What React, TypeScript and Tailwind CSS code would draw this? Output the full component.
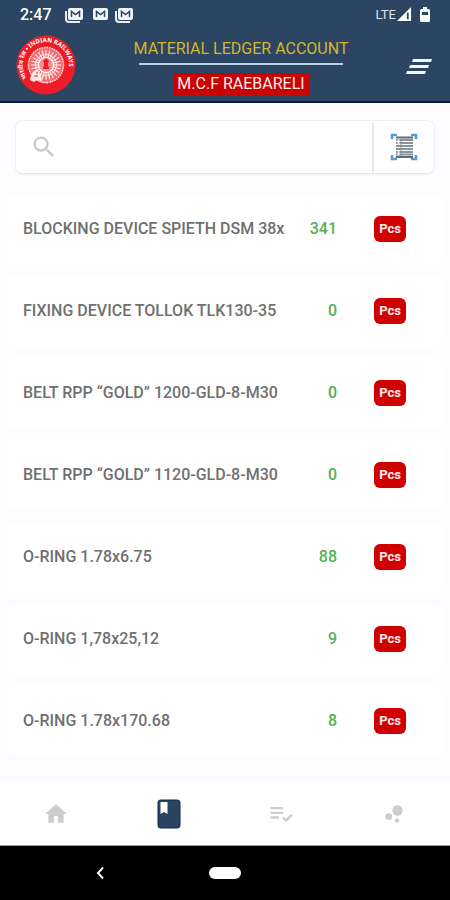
import { MdBubbleChart, MdHome, MdPlaylistAddCheck, MdSearch } from "react-icons/md";

const items = [
  { id: 1, name: "BLOCKING DEVICE SPIETH DSM 38x", stock: 341 },
  { id: 2, name: "FIXING DEVICE TOLLOK TLK130-35", stock: 0 },
  { id: 3, name: "BELT RPP “GOLD” 1200-GLD-8-M30", stock: 0 },
  { id: 4, name: "BELT RPP “GOLD” 1120-GLD-8-M30", stock: 0 },
  { id: 5, name: "O-RING 1.78x6.75", stock: 88 },
  { id: 6, name: "O-RING 1,78x25,12", stock: 9 },
  { id: 7, name: "O-RING 1.78x170.68", stock: 8 },
];

const spokes = Array.from({ length: 24 }, (_, i) => i * 15);

function MailIcon({ stacked = false }: { stacked?: boolean }) {
  return (
    <svg width="20" height="16" viewBox="0 0 20 16" fill="none">
      {stacked && <path d="M2 4v8a3 3 0 0 0 3 3h11" stroke="#e8eef5" strokeWidth="2" />}
      <rect x="4" y="1" width="15" height="12" rx="2" fill="#f1f5f9" />
      <path d="M7.500 10V4.500l4 3 4-3V10" stroke="#2b4562" strokeWidth="1.500" />
    </svg>
  );
}

function StatusBar() {
  return (
    <div className="flex h-7 items-center justify-between pl-5 pr-5 pt-px text-white">
      <div className="flex items-center gap-2">
        <span className="text-base font-medium">2:47</span>
        <div className="flex items-center gap-[5px] pl-1">
          <MailIcon stacked />
          <MailIcon />
          <MailIcon stacked />
        </div>
      </div>
      <div className="flex items-center">
        <span className="text-[13px] text-[#dbe3ec]">LTE</span>
        <svg width="15" height="15" viewBox="0 0 16 16" className="ml-px">
          <path d="M0 15 15 0v15Z" fill="#fff" />
          <path d="M11.500 6v7" stroke="#2b4562" strokeWidth="2" />
        </svg>
        <svg width="10" height="16" viewBox="0 0 10 16" className="ml-2">
          <path d="M3 0h4v2h1.500Q10 2 10 3.500v10Q10 15 8.500 15h-7Q0 15 0 13.500v-10Q0 2 1.500 2H3Z" fill="#fff" />
          <path d="M2 5h6v3H2Z" fill="#2b4562" />
        </svg>
      </div>
    </div>
  );
}

function RailwayLogo() {
  return (
    <svg width="60" height="60" viewBox="0 0 60 60" className="shrink-0" role="img" aria-label="Indian Railways">
      <defs>
        <path id="logo-ring" d="M11 43A23 23 0 1 1 46 46.500" />
      </defs>
      <circle cx="30" cy="30" r="29.500" fill="#ec1c28" />
      <circle cx="30" cy="30" r="18" fill="#f36b71" />
      <circle cx="30" cy="30" r="17.500" fill="none" stroke="#ffd6d6" strokeWidth="1.500" strokeDasharray="1.500 1" />
      {spokes.map((angle) => (
        <path key={angle} d="M30 15v8" stroke="#ffe8e8" strokeWidth="1.200" transform={`rotate(${angle} 30 30)`} />
      ))}
      <circle cx="30" cy="30" r="10.500" fill="none" stroke="#ffe8e8" strokeWidth="1" />
      <circle cx="30" cy="30" r="7.500" fill="#f58e92" stroke="#fff" strokeWidth="1.200" />
      <path d="M27 34h6v-2l-1-1v-3l1-2-3-3-3 3 1 2v3l-1 1Z" fill="#ec1c28" />
      <path d="M14 45c1-6 3-10 8-10l3 5 1 6-5-1-3 2Z" fill="#ffe9e9" />
      <path d="M18 41h4M21 37v2" stroke="#ec1c28" strokeWidth="1" />
      <path d="M26 47q5 2 10-1" stroke="#ffc4c4" strokeWidth="1.500" strokeDasharray="2 2" fill="none" />
      <text fill="#fff" fontSize="6" fontWeight="700" className="font-['Noto_Sans',sans-serif]">
        <textPath href="#logo-ring">भारतीय रेल • INDIAN RAILWAYS</textPath>
      </text>
    </svg>
  );
}

function Header() {
  return (
    <header className="border-b-2 border-[#071747] bg-[#2b4562]">
      <StatusBar />
      <div className="flex h-[73px] items-center justify-between px-4">
        <RailwayLogo />
        <div className="flex flex-col items-center pt-1">
          <h1 className="text-base leading-5 text-[#d5b62d]">MATERIAL LEDGER ACCOUNT</h1>
          <div className="mt-1 h-[2px] w-[204px] bg-[#b9d0e4]" />
          <p className="mt-2 bg-[#cb0000] px-1 text-base leading-[22px] text-[#f6eeee]">M.C.F RAEBARELI</p>
        </div>
        <button type="button" aria-label="Menu" className="cursor-pointer pt-1">
          <svg width="28" height="16" viewBox="0 0 28 16" fill="#f3f6fa">
            <path d="M7 0h19l-1 3H6ZM4 6h19l-1 3H3ZM1 12h19l-1 3H0Z" />
          </svg>
        </button>
      </div>
    </header>
  );
}

function ScanIcon() {
  return (
    <svg width="28" height="28" viewBox="0 0 28 28" fill="none">
      <path d="M2 6V2h5M21 2h5v4M26 22v4h-5M7 26H2v-4" stroke="#4a9fd6" strokeWidth="2.500" />
      <path d="M6 4.500h17M6 24h17" stroke="#5f6b73" strokeWidth="2" />
      <path d="M6 7h17M6 10h17M6 13h17M6 16h17M6 19h17M6 21.500h17" stroke="#87939a" strokeWidth="1.800" />
      <path d="M8.500 6v6M8.500 18v4" stroke="#eef2f4" strokeWidth="1.800" />
      <path d="M11 6v17" stroke="#87939a" strokeWidth="1" />
    </svg>
  );
}

function SearchBar() {
  return (
    <div className="mx-[15px] mt-[17px] flex h-[54px] items-center rounded-lg border border-[#f1eff2] border-b-[#e6e4e7] bg-white shadow-xs">
      <label htmlFor="search" className="pl-[14px] text-[#cacaca]">
        <MdSearch size={28} />
      </label>
      <input id="search" type="search" aria-label="Search items" className="h-full min-w-0 flex-1 px-2 text-base outline-none" />
      <button type="button" aria-label="Scan barcode" className="flex h-[49px] w-[62px] cursor-pointer items-center justify-center border-l-2 border-[#e9e8ea]">
        <ScanIcon />
      </button>
    </div>
  );
}

function NavBar() {
  return (
    <nav className="grid h-[64px] grid-cols-4 items-center border-b border-[#9a9a9a] bg-white text-[#cdcdcd]">
      <a href="#home" aria-label="Home" className="flex justify-center">
        <MdHome size={26} />
      </a>
      <a href="#ledger" aria-label="Ledger" className="flex justify-center">
        <svg width="24" height="30" viewBox="0 0 24 30">
          <rect x="1" y="1" width="22" height="28" rx="2.500" fill="#284460" stroke="#10284a" />
          <path d="M3.500 3h7v12L7 13l-3.500 2Z" fill="#fff" />
        </svg>
      </a>
      <a href="#checklist" aria-label="Checklist" className="flex justify-center">
        <MdPlaylistAddCheck size={28} />
      </a>
      <a href="#reports" aria-label="Reports" className="flex justify-center">
        <MdBubbleChart size={26} />
      </a>
    </nav>
  );
}

function SystemBar() {
  return (
    <div className="grid h-[54px] grid-cols-[1fr_32px_1fr] items-center bg-black">
      <button type="button" aria-label="Back" className="ml-[94px] w-3 cursor-pointer">
        <svg width="12" height="14" viewBox="0 0 12 14" fill="none">
          <path d="M9 1.500 4 7l5 5.500" stroke="#fff" strokeWidth="2" />
        </svg>
      </button>
      <button type="button" aria-label="Home screen" className="h-3 w-8 cursor-pointer rounded-full bg-white" />
    </div>
  );
}

export default function App() {
  return (
    <div className="flex min-h-screen flex-col bg-[#fdfcfe] font-[Roboto,sans-serif]">
      <Header />
      <main className="flex-1">
        <SearchBar />
        <ul className="mt-5 space-y-3 pl-[7px] pr-2">
          {items.map((item) => (
            <li key={item.id} className="flex h-[70px] items-center rounded-lg bg-white pl-4 pr-9">
              <span className="min-w-0 flex-1 truncate text-base font-medium text-[#707070]">{item.name}</span>
              <span className="w-12 text-right text-base font-medium text-[#55b05b]">{item.stock}</span>
              <span className="ml-[37px] flex h-[26px] w-8 items-center justify-center rounded-md bg-[#d00000] text-[13px] font-bold text-[#ffeaea]">
                Pcs
              </span>
            </li>
          ))}
        </ul>
      </main>
      <NavBar />
      <SystemBar />
    </div>
  );
}
